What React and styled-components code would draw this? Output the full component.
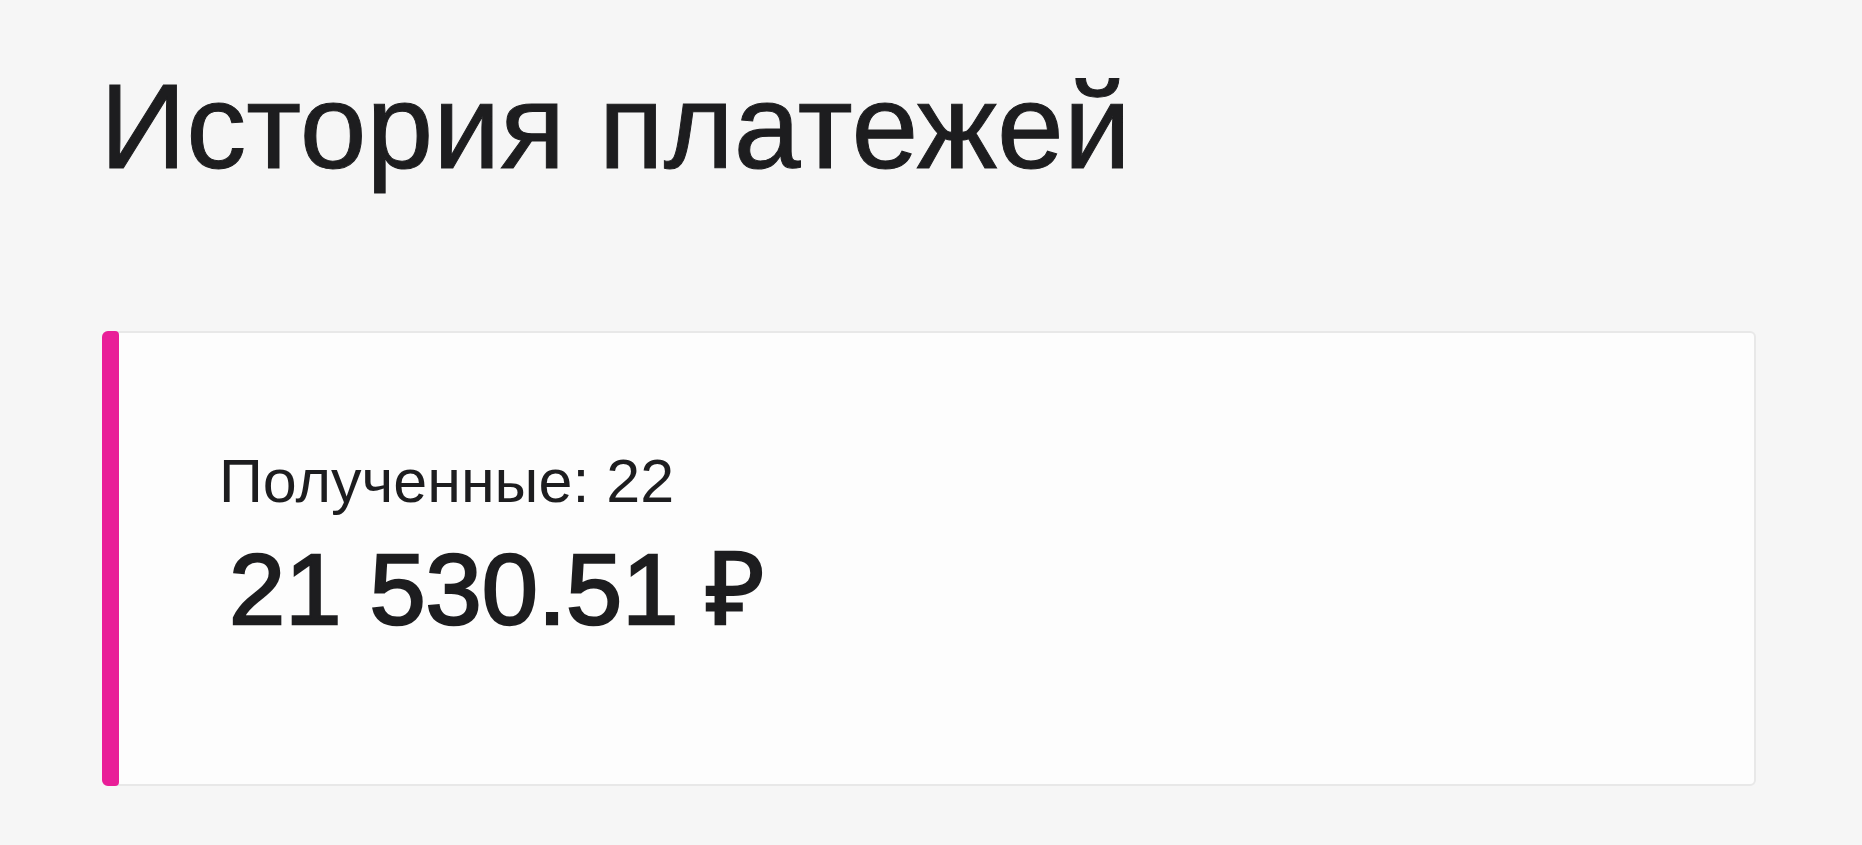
import React from 'react';
import styled, { createGlobalStyle } from 'styled-components';

const GlobalStyle = createGlobalStyle`
  html, body {
    margin: 0;
    padding: 0;
    background-color: #f6f6f6;
  }
  body {
    font-family: "Liberation Sans", Arial, sans-serif;
    color: #1d1d1f;
  }
`;

const Page = styled.main`
  min-height: 845px;
  box-sizing: border-box;
  padding: 66px 106px 0 101px;
`;

const Title = styled.h1`
  margin: 0 0 145px -1px;
  font-size: 120px;
  font-weight: 400;
  line-height: 1;
  color: #1d1d1f;
  -webkit-text-stroke: 1px #1d1d1f;
`;

const Card = styled.section`
  position: relative;
  display: flex;
  flex-direction: column;
  align-items: flex-start;
  margin-left: 1px;
  padding: 113px 0 137px 115px;
  background-color: #fdfdfd;
  border: 2px solid #e8e8e8;
  border-radius: 6px;

  &::before {
    content: '';
    position: absolute;
    left: -2px;
    top: -2px;
    bottom: -2px;
    width: 17px;
    background-color: ${({ accent }) => accent};
    border-radius: 6px 4px 4px 6px;
  }
`;

const Label = styled.div`
  font-size: 61px;
  line-height: 1.15;
  color: #1d1d1f;
`;

const Amount = styled.div`
  margin: 15px 0 0 10px;
  font-size: 101px;
  font-weight: 400;
  line-height: 1.15;
  color: #1d1d1f;
  -webkit-text-stroke: 2.5px #1d1d1f;
`;

const summary = { label: 'Полученные', count: 22, amount: '21\u00a0530.51\u00a0₽' };

const App = () => {
  return (
    <>
      <GlobalStyle />
      <Page>
        <Title>История платежей</Title>
        <Card accent="#e91e98">
          <Label>
            {summary.label}: {summary.count}
          </Label>
          <Amount>{summary.amount}</Amount>
        </Card>
      </Page>
    </>
  );
};

export default App;
